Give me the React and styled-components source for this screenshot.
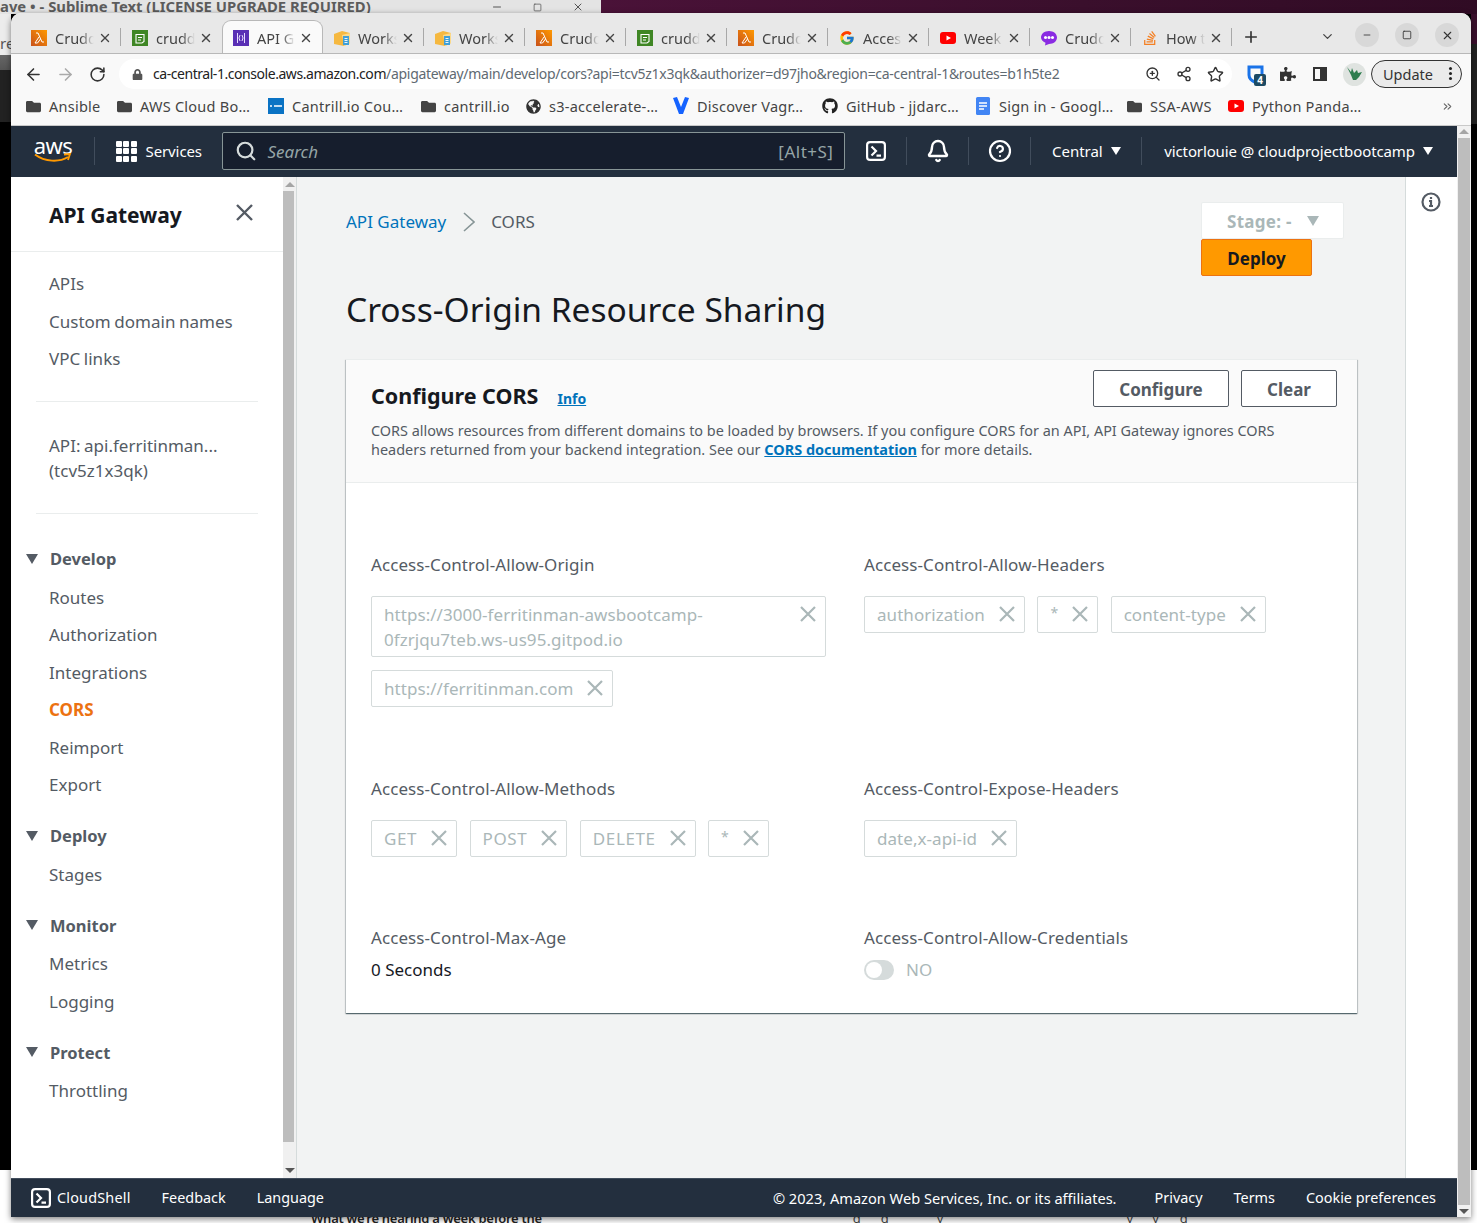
import styled, { createGlobalStyle } from 'styled-components';
import {
  ArrowLeft,
  ArrowRight,
  Bell,
  ChevronDown,
  ChevronsRight,
  CircleHelp,
  Minus,
  Plus,
  RotateCw,
  Search,
  Share2,
  Square,
  Star,
  X,
  ZoomIn,
} from 'lucide-react';
import { FaFolder, FaGithub, FaGlobeAmericas, FaLock, FaPuzzlePiece, FaStackOverflow } from 'react-icons/fa';
import { FcGoogle } from 'react-icons/fc';

const TABS = [
  { icon: 'lambda', title: 'Crudder' },
  { icon: 'rds', title: 'cruddur' },
  { icon: 'gateway', title: 'API Gateway', active: true },
  { icon: 'box', title: 'Workspaces' },
  { icon: 'box', title: 'Workspaces' },
  { icon: 'lambda', title: 'Crudder' },
  { icon: 'rds', title: 'cruddur' },
  { icon: 'lambda', title: 'Crudder' },
  { icon: 'google', title: 'Access' },
  { icon: 'youtube', title: 'Week 2' },
  { icon: 'chat', title: 'Cruddur' },
  { icon: 'stack', title: 'How to' },
];

const BOOKMARKS = [
  { icon: 'folder', label: 'Ansible', width: 91 },
  { icon: 'folder', label: 'AWS Cloud Bo…', width: 152 },
  { icon: 'cantrill', label: 'Cantrill.io Cou…', width: 152 },
  { icon: 'folder', label: 'cantrill.io', width: 105 },
  { icon: 'globe', label: 's3-accelerate-…', width: 148 },
  { icon: 'vagrant', label: 'Discover Vagr…', width: 149 },
  { icon: 'github', label: 'GitHub - jjdarc…', width: 153 },
  { icon: 'doc', label: 'Sign in - Googl…', width: 151 },
  { icon: 'folder', label: 'SSA-AWS', width: 102 },
  { icon: 'youtube', label: 'Python Panda…', width: 207 },
];

const NAV_GROUPS = [
  { title: 'Develop', items: ['Routes', 'Authorization', 'Integrations', 'CORS', 'Reimport', 'Export'] },
  { title: 'Deploy', items: ['Stages'] },
  { title: 'Monitor', items: ['Metrics', 'Logging'] },
  { title: 'Protect', items: ['Throttling'] },
];

// letters of the page behind the browser, only their tails stick out below the window
const BEHIND_TAILS = [
  { letter: 'g', gap: 311 },
  { letter: 'g', gap: 20 },
  { letter: 'y', gap: 48 },
  { letter: 'y', gap: 183 },
  { letter: 'y', gap: 19 },
  { letter: 'g', gap: 21 },
];

function SiteIcon({ kind }) {
  switch (kind) {
    case 'lambda':
      return (
        <svg width="16" height="16" viewBox="0 0 16 16">
          <defs>
            <linearGradient id="lambdaFill" x1="0" y1="1" x2="1" y2="0">
              <stop offset="0" stopColor="#c8511b" />
              <stop offset="1" stopColor="#ff9900" />
            </linearGradient>
          </defs>
          <rect width="16" height="16" fill="url(#lambdaFill)" />
          <path d="M5 3h2l4 9h2M8 7l-4 6h2.5l3-4" fill="none" stroke="#fff" strokeWidth="1" />
        </svg>
      );
    case 'rds':
      return (
        <svg width="16" height="16" viewBox="0 0 16 16">
          <rect width="16" height="16" fill="#3f8624" />
          <path d="M4 4.5h8v7l-2 1.5H4zM6 7.5h4M6 10h3" fill="none" stroke="#fff" strokeWidth="1.1" />
        </svg>
      );
    case 'gateway':
      return (
        <svg width="16" height="16" viewBox="0 0 16 16">
          <rect width="16" height="16" fill="#5a30b5" />
          <path d="M4.5 3v10M11.5 3v10M7 5l-1 3 1 3M9 5l1 3-1 3" fill="none" stroke="#e6dcff" strokeWidth="1" />
        </svg>
      );
    case 'box':
      return (
        <svg width="16" height="16" viewBox="0 0 16 16">
          <path d="M0 4l8-3 8 2v10l-6 3-10-2z" fill="#f5b840" />
          <path d="M8 5l8-2v10l-6 3z" fill="#fbd98a" />
          <path d="M9 6h6v9H9z" fill="#3f9fd8" />
          <path d="M10.5 8.5h3M10.5 10.5h3M10.5 12.5h3" stroke="#fff" strokeWidth="0.9" />
        </svg>
      );
    case 'google':
      return <FcGoogle size={16} />;
    case 'youtube':
      return (
        <svg width="16" height="16" viewBox="0 0 16 16">
          <rect y="2" width="16" height="12" rx="3" fill="#f00" />
          <path d="M6.5 5.5L11 8l-4.5 2.5z" fill="#fff" />
        </svg>
      );
    case 'chat':
      return (
        <svg width="16" height="16" viewBox="0 0 16 16">
          <path d="M8 1c4.5 0 8 2.8 8 6.5S12.5 14 8 14l-4 1.5.5-2.7C1.8 11.500 0 9.7 0 7.5 0 3.8 3.5 1 8 1z" fill="#8a2be2" />
          <circle cx="4.5" cy="7.5" r="1.5" fill="#fff" />
          <circle cx="8" cy="7.5" r="1.5" fill="#fff" />
          <circle cx="11.5" cy="7.5" r="1.5" fill="#fff" />
        </svg>
      );
    case 'stack':
      return <FaStackOverflow size={16} color="#f48024" />;
    case 'folder':
      return <FaFolder size={15} color="#444" />;
    case 'cantrill':
      return (
        <svg width="16" height="16" viewBox="0 0 16 16">
          <rect width="16" height="16" fill="#0a73c4" />
          <path d="M2 8h2M6 8h8" stroke="#fff" strokeWidth="1.5" />
        </svg>
      );
    case 'globe':
      return <FaGlobeAmericas size={15} color="#333" />;
    case 'vagrant':
      return (
        <svg width="16" height="18" viewBox="0 0 16 18">
          <path d="M0 1l4-1 4 10 4-10 4 1-6 16H6z" fill="#1563ff" />
        </svg>
      );
    case 'github':
      return <FaGithub size={16} color="#222" />;
    case 'doc':
      return (
        <svg width="16" height="18" viewBox="0 0 16 18">
          <rect x="1" width="14" height="18" rx="1.5" fill="#4285f4" />
          <path d="M4 6h8M4 9h8M4 12h5" stroke="#fff" strokeWidth="1.5" />
        </svg>
      );
    default:
      return null;
  }
}

function ShellIcon() {
  return (
    <svg width="20" height="20" viewBox="0 0 20 20" fill="none" stroke="#fff" strokeWidth="2.2">
      <rect x="1.1" y="1.1" width="17.8" height="17.8" rx="3" />
      <path d="M5.5 5.5l4.5 4.500-4.5 4.500M10.5 14.700h4.500" />
    </svg>
  );
}

function Cross({ size = 16, weight = 2.2 }) {
  return (
    <svg width={size} height={size} viewBox={`0 0 ${size} ${size}`} fill="none" stroke="currentColor" strokeWidth={weight}>
      <path d={`M1 1L${size - 1} ${size - 1}M${size - 1} 1L1 ${size - 1}`} />
    </svg>
  );
}

function Chip({ children, wide, caps, star }) {
  return (
    <ChipBox $wide={wide}>
      <ChipText $caps={caps} $star={star}>
        {children}
      </ChipText>
      <ChipClose>
        <Cross />
      </ChipClose>
    </ChipBox>
  );
}

function TabItem({ tab, hideSeparator }) {
  return (
    <Tab $active={tab.active} $hideSeparator={hideSeparator}>
      <TabIcon>
        <SiteIcon kind={tab.icon} />
      </TabIcon>
      <TabTitle>{tab.title}</TabTitle>
      <X size={14} strokeWidth={2.4} color="#444" />
    </Tab>
  );
}

export default function App() {
  return (
    <Desktop>
      <GlobalStyle />
      <Wallpaper />
      <SublimeBar>
        <SublimeTitle>ave • - Sublime Text (LICENSE UPGRADE REQUIRED)</SublimeTitle>
        <SublimeControls>
          <Minus size={12} />
          <Square size={9} />
          <X size={12} />
        </SublimeControls>
      </SublimeBar>
      <LeftEdge>re</LeftEdge>
      <RightEdge />
      <ArticleBehind>
        <ArticleLine>What we’re hearing a week before the</ArticleLine>
        {BEHIND_TAILS.map((tail, index) => (
          <ArticleTail key={index} $gap={tail.gap}>
            {tail.letter}
          </ArticleTail>
        ))}
      </ArticleBehind>

      <BrowserWindow>
        <TabStrip>
          {TABS.map((tab, index) => (
            <TabItem key={index} tab={tab} hideSeparator={TABS[index + 1]?.active} />
          ))}
          <NewTab>
            <Plus size={18} strokeWidth={2.2} />
          </NewTab>
          <TabSearch>
            <ChevronDown size={15} strokeWidth={2} />
          </TabSearch>
          <WindowControl>
            <Minus size={10} />
          </WindowControl>
          <WindowControl>
            <Square size={10} />
          </WindowControl>
          <WindowControl>
            <X size={13} />
          </WindowControl>
        </TabStrip>

        <Toolbar>
          <ToolButton>
            <ArrowLeft size={19} strokeWidth={2} />
          </ToolButton>
          <ToolButton $dim>
            <ArrowRight size={19} strokeWidth={2} />
          </ToolButton>
          <ToolButton>
            <RotateCw size={17} strokeWidth={2.2} />
          </ToolButton>
          <Omnibox>
            <FaLock size={11} color="#555" />
            <UrlText>
              <UrlHost>ca-central-1.console.aws.amazon.com</UrlHost>
              /apigateway/main/develop/cors?api=tcv5z1x3qk&authorizer=d97jho&region=ca-central-1&routes=b1h5te2
            </UrlText>
            <OmniIcons>
              <ZoomIn size={16} />
              <Share2 size={16} />
              <Star size={17} />
            </OmniIcons>
          </Omnibox>
          <ExtensionIcons>
            <Bitwarden>
              <svg width="17" height="19" viewBox="0 0 17 19" fill="none">
                <path d="M2 2h13v8c0 3.5-3 6-6.5 7.5C5 16 2 13.5 2 10z" stroke="#1a73e8" strokeWidth="3" />
              </svg>
              <BadgeCount>4</BadgeCount>
            </Bitwarden>
            <FaPuzzlePiece size={16} color="#333" />
            <SidePanelIcon />
            <Avatar>
              <svg width="18" height="16" viewBox="0 0 18 16">
                <path d="M1 1l4 5 1-4 2 5 3-3 1 3 4-1-3 5-3 3H7L5 9z" fill="#2e7d4f" />
              </svg>
            </Avatar>
          </ExtensionIcons>
          <UpdatePill>
            <span>Update</span>
            <PillDots>
              <i />
              <i />
              <i />
            </PillDots>
          </UpdatePill>
        </Toolbar>

        <BookmarkBar>
          {BOOKMARKS.map((bookmark) => (
            <Bookmark key={bookmark.label} $width={bookmark.width}>
              <BookmarkIcon>
                <SiteIcon kind={bookmark.icon} />
              </BookmarkIcon>
              {bookmark.label}
            </Bookmark>
          ))}
          <BookmarkMore>
            <ChevronsRight size={13} strokeWidth={2} />
          </BookmarkMore>
        </BookmarkBar>

        <PageArea>
          <Console>
            <TopNav>
              <AwsLogo>
                <AwsWord>aws</AwsWord>
                <svg width="38" height="10" viewBox="0 0 38 10" fill="none">
                  <path d="M1 1.5c10 7.5 24 8 33 2.5" stroke="#f90" strokeWidth="2" />
                  <path d="M30 1.5l6-.5-2 6" stroke="#f90" strokeWidth="1.8" />
                </svg>
              </AwsLogo>
              <NavDivider />
              <ServicesButton>
                <GridDots>
                  {Array.from({ length: 9 }, (_, index) => (
                    <i key={index} />
                  ))}
                </GridDots>
                Services
              </ServicesButton>
              <SearchBox>
                <Search size={22} strokeWidth={2.4} color="#d5dbdb" />
                <SearchPlaceholder>Search</SearchPlaceholder>
                <SearchHint>[Alt+S]</SearchHint>
              </SearchBox>
              <ShellIcon />
              <NavDivider />
              <NavIcon>
                <Bell size={24} strokeWidth={2.4} color="#fff" />
              </NavIcon>
              <NavDivider />
              <NavIcon>
                <CircleHelp size={24} strokeWidth={2.2} color="#fff" />
              </NavIcon>
              <NavDivider />
              <NavMenu>
                Central <Caret />
              </NavMenu>
              <NavDivider />
              <NavMenu $account>
                victorlouie @ cloudprojectbootcamp <Caret />
              </NavMenu>
            </TopNav>

            <ConsoleBody>
              <Sidebar>
                <SidebarHeader>
                  <SidebarTitle>API Gateway</SidebarTitle>
                  <SidebarClose>
                    <Cross size={17} weight={2.4} />
                  </SidebarClose>
                </SidebarHeader>
                <NavList>
                  <NavItem>APIs</NavItem>
                  <NavItem>Custom domain names</NavItem>
                  <NavItem>VPC links</NavItem>
                </NavList>
                <SidebarRule />
                <ApiName>
                  API: api.ferritinman...
                  <br />
                  (tcv5z1x3qk)
                </ApiName>
                <SidebarRule />
                <NavGroups>
                  {NAV_GROUPS.map((group) => (
                    <NavGroup key={group.title}>
                      <NavGroupTitle>
                        <GroupCaret />
                        {group.title}
                      </NavGroupTitle>
                      {group.items.map((item) => (
                        <NavItem key={item} $current={item === 'CORS'}>
                          {item}
                        </NavItem>
                      ))}
                    </NavGroup>
                  ))}
                </NavGroups>
              </Sidebar>
              <SidebarScroll>
                <ScrollUp />
                <SidebarThumb />
                <ScrollDown />
              </SidebarScroll>

              <Main>
                <MainTop>
                  <Breadcrumbs>
                    <CrumbLink>API Gateway</CrumbLink>
                    <svg width="12" height="20" viewBox="0 0 12 20" fill="none" stroke="#879596" strokeWidth="1.6">
                      <path d="M1 1l10 9-10 9" />
                    </svg>
                    <span>CORS</span>
                  </Breadcrumbs>
                  <StageColumn>
                    <StageSelect>
                      Stage: - <StageCaret />
                    </StageSelect>
                    <DeployButton>Deploy</DeployButton>
                  </StageColumn>
                </MainTop>
                <PageTitle>Cross-Origin Resource Sharing</PageTitle>

                <Card>
                  <CardHeader>
                    <CardTitleRow>
                      <CardTitle>Configure CORS</CardTitle>
                      <InfoLink>Info</InfoLink>
                      <CardActions>
                        <OutlineButton $width={136}>Configure</OutlineButton>
                        <OutlineButton $width={96}>Clear</OutlineButton>
                      </CardActions>
                    </CardTitleRow>
                    <CardDescription>
                      CORS allows resources from different domains to be loaded by browsers. If you configure CORS for an API, API Gateway ignores CORS
                      <br />
                      headers returned from your backend integration. See our <DocLink>CORS documentation</DocLink> for more details.
                    </CardDescription>
                  </CardHeader>

                  <FormGrid>
                    <Field>
                      <FieldLabel>Access-Control-Allow-Origin</FieldLabel>
                      <ChipList>
                        <Chip wide>https://3000-ferritinman-awsbootcamp-0fzrjqu7teb.ws-us95.gitpod.io</Chip>
                        <Chip>https://ferritinman.com</Chip>
                      </ChipList>
                    </Field>
                    <Field>
                      <FieldLabel>Access-Control-Allow-Headers</FieldLabel>
                      <ChipList>
                        <Chip>authorization</Chip>
                        <Chip star>*</Chip>
                        <Chip>content-type</Chip>
                      </ChipList>
                    </Field>
                    <Field>
                      <FieldLabel>Access-Control-Allow-Methods</FieldLabel>
                      <ChipList>
                        <Chip caps>GET</Chip>
                        <Chip caps>POST</Chip>
                        <Chip caps>DELETE</Chip>
                        <Chip star>*</Chip>
                      </ChipList>
                    </Field>
                    <Field>
                      <FieldLabel>Access-Control-Expose-Headers</FieldLabel>
                      <ChipList>
                        <Chip>date,x-api-id</Chip>
                      </ChipList>
                    </Field>
                    <Field>
                      <FieldLabel>Access-Control-Max-Age</FieldLabel>
                      <FieldValue>0 Seconds</FieldValue>
                    </Field>
                    <Field>
                      <FieldLabel>Access-Control-Allow-Credentials</FieldLabel>
                      <ToggleRow>
                        <Toggle />
                        NO
                      </ToggleRow>
                    </Field>
                  </FormGrid>
                </Card>
              </Main>

              <InfoRail>
                <svg width="20" height="20" viewBox="0 0 20 20" fill="none" stroke="#545b64" strokeWidth="2.2">
                  <circle cx="10" cy="10" r="8.5" />
                  <path d="M8 9h2v5M8 14h4M10 5v2" />
                </svg>
              </InfoRail>
            </ConsoleBody>

            <Footer>
              <FooterGroup>
                <CloudShellLink>
                  <ShellIcon />
                  CloudShell
                </CloudShellLink>
                <span>Feedback</span>
                <span>Language</span>
              </FooterGroup>
              <FooterLegal>
                <span>© 2023, Amazon Web Services, Inc. or its affiliates.</span>
                <span>Privacy</span>
                <span>Terms</span>
                <span>Cookie preferences</span>
              </FooterLegal>
            </Footer>
          </Console>
          <PageScroll>
            <ScrollUp />
            <PageThumb />
            <ScrollDown />
          </PageScroll>
        </PageArea>
      </BrowserWindow>
    </Desktop>
  );
}

const GlobalStyle = createGlobalStyle`
  html, body {
    margin: 0;
    padding: 0;
  }
  body {
    font-family: "Noto Sans", "Open Sans", sans-serif;
    overflow: hidden;
  }
  * {
    box-sizing: border-box;
  }
`;

const Desktop = styled.div`
  position: relative;
  width: 1477px;
  height: 1223px;
  overflow: hidden;
  background: #000;
`;

const Wallpaper = styled.div`
  position: absolute;
  top: 0;
  left: 601px;
  right: 0;
  height: 14px;
  background: linear-gradient(90deg, #4a1238, #3a0f2c 55%, #300b24);
`;

const SublimeBar = styled.div`
  position: absolute;
  top: 0;
  left: 0;
  width: 601px;
  height: 14px;
  display: flex;
  align-items: center;
  justify-content: space-between;
  background: #e4e4e4;
  overflow: hidden;
`;

const SublimeTitle = styled.span`
  font-size: 14.85px;
  font-weight: 700;
  color: #5c5c5c;
  white-space: nowrap;
  margin-top: -3px;
`;

const SublimeControls = styled.div`
  display: flex;
  align-items: center;
  gap: 30px;
  padding-right: 17px;
  color: #555;
`;

const LeftEdge = styled.div`
  position: absolute;
  top: 14px;
  left: 0;
  width: 11px;
  height: 1156px;
  overflow: hidden;
  padding-top: 21px;
  font-size: 15px;
  line-height: 16px;
  color: #555;
  background: linear-gradient(
    180deg,
    #ececec 0,
    #ececec 41px,
    #666 41px,
    #555 56px,
    #222 56px,
    #222 108px,
    #000 108px
  );
`;

const RightEdge = styled.div`
  position: absolute;
  top: 14px;
  right: 0;
  width: 6px;
  height: 1156px;
  background: linear-gradient(180deg, #3a0f2c 0, #3a0f2c 30px, #222 30px, #222 110px, #000 110px);
`;

const ArticleBehind = styled.div`
  position: absolute;
  left: 0;
  right: 0;
  top: 1170px;
  bottom: 0;
  display: flex;
  align-items: flex-end;
  background: #fff;
`;

const ArticleLine = styled.span`
  margin-left: 311px;
  margin-bottom: -2px;
  font-size: 13px;
  line-height: 14px;
  font-weight: 600;
  letter-spacing: -0.27px;
  color: #222;
  white-space: nowrap;
`;

const ArticleTail = styled.span`
  margin-left: ${(props) => props.$gap}px;
  margin-bottom: -2px;
  font-size: 13px;
  line-height: 14px;
  color: #444;
`;

const BrowserWindow = styled.div`
  position: absolute;
  top: 13px;
  left: 11px;
  width: 1460px;
  height: 1204px;
  display: flex;
  flex-direction: column;
  border-radius: 10px 10px 0 0;
  overflow: hidden;
  box-shadow: 0 2px 6px rgba(0, 0, 0, 0.5);
  background: #fff;
`;

const TabStrip = styled.div`
  display: flex;
  align-items: flex-end;
  height: 41px;
  padding-left: 9px;
  background: #e8e8e8;
  border-bottom: 1px solid #b8b8b8;
  flex-shrink: 0;
  overflow: hidden;
`;

const Tab = styled.div`
  position: relative;
  width: 101px;
  height: 33px;
  display: flex;
  align-items: center;
  padding: 2px 9px 0 ${(props) => (props.$active ? '10px' : '11px')};
  flex-shrink: 0;
  color: #444;
  background: ${(props) => (props.$active ? '#fafafa' : 'transparent')};
  border-radius: ${(props) => (props.$active ? '9px 9px 0 0' : '0')};
  border: ${(props) => (props.$active ? '1px solid #b8b8b8' : '0')};
  border-bottom: 0;

  &::after {
    content: '';
    display: ${(props) => (props.$active || props.$hideSeparator ? 'none' : 'block')};
    position: absolute;
    right: 0;
    top: 8px;
    width: 1px;
    height: 18px;
    background: #a8a8a8;
  }
`;

const TabIcon = styled.span`
  display: flex;
  width: 16px;
  height: 16px;
  flex-shrink: 0;
`;

const TabTitle = styled.span`
  flex: 1;
  min-width: 0;
  margin: 0 4px 0 8px;
  overflow: hidden;
  white-space: nowrap;
  font-size: 14.5px;
  mask-image: linear-gradient(90deg, #000 65%, transparent 100%);
`;

const NewTab = styled.div`
  display: flex;
  align-items: center;
  justify-content: center;
  width: 18px;
  height: 33px;
  margin-left: 10px;
  color: #333;
  flex-shrink: 0;
`;

const TabSearch = styled.div`
  display: flex;
  align-items: center;
  height: 33px;
  margin-left: 60px;
  margin-right: 20px;
  color: #444;
  flex-shrink: 0;
`;

const WindowControl = styled.div`
  display: flex;
  align-items: center;
  justify-content: center;
  width: 24px;
  height: 24px;
  margin-right: 16px;
  margin-bottom: 6px;
  border-radius: 50%;
  background: #d8d8d8;
  color: #333;
  flex-shrink: 0;
`;

const Toolbar = styled.div`
  display: flex;
  align-items: center;
  height: 38px;
  padding: 2px 0 0 6px;
  background: #f9f9f9;
  flex-shrink: 0;
`;

const ToolButton = styled.div`
  display: flex;
  align-items: center;
  justify-content: center;
  width: 32px;
  color: ${(props) => (props.$dim ? '#aaa' : '#333')};
`;

const Omnibox = styled.div`
  display: flex;
  align-items: center;
  width: 1113px;
  height: 30px;
  margin-left: 6px;
  padding-left: 13px;
  border-radius: 15px;
  background: #fff;
`;

const UrlText = styled.div`
  margin: -2px 0 0 10px;
  font-size: 14px;
  color: #5f6a72;
  white-space: nowrap;
  letter-spacing: -0.28px;
`;

const UrlHost = styled.span`
  color: #222;
  letter-spacing: -0.45px;
`;

const OmniIcons = styled.div`
  display: flex;
  align-items: center;
  gap: 15px;
  margin-left: auto;
  padding-right: 8px;
  color: #333;
`;

const ExtensionIcons = styled.div`
  display: flex;
  align-items: center;
  gap: 16px;
  margin-left: 15px;
`;

const Bitwarden = styled.div`
  position: relative;
  display: flex;
  width: 17px;
  height: 19px;
`;

const BadgeCount = styled.span`
  position: absolute;
  left: 7px;
  top: 9px;
  width: 12px;
  height: 12px;
  border-radius: 2px;
  background: #1d4a63;
  color: #fff;
  font-size: 10px;
  font-weight: 700;
  line-height: 12px;
  text-align: center;
`;

const SidePanelIcon = styled.div`
  width: 14px;
  height: 14px;
  border: 2px solid #333;
  border-right-width: 7px;
  margin-left: 1px;
`;

const Avatar = styled.div`
  display: flex;
  align-items: center;
  justify-content: center;
  width: 23px;
  height: 23px;
  border-radius: 50%;
  background: #dfe3e0;
`;

const UpdatePill = styled.div`
  display: flex;
  align-items: center;
  justify-content: space-between;
  width: 91px;
  height: 28px;
  margin-left: 5px;
  padding: 0 9px 1px 11px;
  border: 1px solid #333;
  border-radius: 14px;
  background: #ebebeb;
  color: #333;
  font-size: 14.5px;
`;

const PillDots = styled.div`
  display: flex;
  flex-direction: column;
  gap: 2px;

  i {
    display: block;
    width: 3px;
    height: 3px;
    border-radius: 50%;
    background: #222;
  }
`;

const BookmarkBar = styled.div`
  display: flex;
  align-items: center;
  height: 34px;
  padding: 0 0 5px 14px;
  background: #f9f9f9;
  border-bottom: 1px solid #c9c9c9;
  flex-shrink: 0;
`;

const Bookmark = styled.div`
  display: flex;
  align-items: center;
  width: ${(props) => props.$width}px;
  font-size: 14.5px;
  letter-spacing: 0.25px;
  color: #444;
  white-space: nowrap;
  flex-shrink: 0;
`;

const BookmarkIcon = styled.span`
  display: flex;
  align-items: center;
  justify-content: center;
  width: 16px;
  height: 18px;
  margin-right: 8px;
`;

const BookmarkMore = styled.div`
  display: flex;
  margin-left: 6px;
  color: #666;
`;

const PageArea = styled.div`
  display: flex;
  flex: 1;
  min-height: 0;
`;

const Console = styled.div`
  display: flex;
  flex-direction: column;
  width: 1446px;
  flex-shrink: 0;
`;

const PageScroll = styled.div`
  display: flex;
  flex-direction: column;
  align-items: center;
  width: 14px;
  padding: 3px 0;
  background: #f1f1f1;
`;

const PageThumb = styled.div`
  flex: 1;
  width: 12px;
  margin: 4px 0;
  background: #bdbdbd;
`;

const ScrollUp = styled.div`
  width: 0;
  height: 0;
  border-left: 5px solid transparent;
  border-right: 5px solid transparent;
  border-bottom: 5px solid #a5a5a5;
`;

const ScrollDown = styled.div`
  width: 0;
  height: 0;
  border-left: 5px solid transparent;
  border-right: 5px solid transparent;
  border-top: 5px solid #555;
`;

const TopNav = styled.div`
  display: flex;
  align-items: center;
  gap: 20.5px;
  height: 51px;
  padding: 0 24px 1px 23px;
  background: #232f3e;
  color: #fff;
  font-size: 15px;
  flex-shrink: 0;
`;

const AwsLogo = styled.div`
  display: flex;
  flex-direction: column;
  align-items: center;
  width: 38px;
  height: 30px;
  margin-right: 1.5px;
  flex-shrink: 0;

  svg {
    margin-top: -5px;
  }
`;

const AwsWord = styled.span`
  font-size: 22px;
  line-height: 25px;
  letter-spacing: -0.5px;
  margin-top: -3px;
`;

const NavDivider = styled.div`
  width: 1px;
  height: 28px;
  background: #414d5c;
  flex-shrink: 0;
`;

const ServicesButton = styled.div`
  display: flex;
  align-items: center;
  gap: 9px;
  letter-spacing: -0.1px;
  white-space: nowrap;
  flex-shrink: 0;
`;

const GridDots = styled.div`
  display: grid;
  grid-template-columns: repeat(3, 6px);
  gap: 1.5px;

  i {
    display: block;
    width: 6px;
    height: 6px;
    border-radius: 1px;
    background: #fff;
  }
`;

const SearchBox = styled.div`
  display: flex;
  align-items: center;
  width: 623px;
  height: 38px;
  padding: 0 11px 0 12px;
  border: 1px solid #879596;
  border-radius: 2px;
  background: #161e2d;
  flex-shrink: 0;
`;

const SearchPlaceholder = styled.span`
  margin-left: 10px;
  font-style: italic;
  color: #95a5a6;
  font-size: 17px;
`;

const SearchHint = styled.span`
  margin-left: auto;
  color: #95a5a6;
  font-size: 17px;
  letter-spacing: 0.5px;
`;

const NavIcon = styled.div`
  display: flex;
  justify-content: center;
  width: 20px;
  flex-shrink: 0;

  svg {
    flex-shrink: 0;
  }
`;

const NavMenu = styled.div`
  display: flex;
  align-items: center;
  gap: 8px;
  margin-left: ${(props) => (props.$account ? '1.5px' : '0')};
  letter-spacing: ${(props) => (props.$account ? '-0.12px' : '0')};
  white-space: nowrap;
  flex-shrink: 0;
`;

const Caret = styled.span`
  width: 0;
  height: 0;
  border-left: 5.5px solid transparent;
  border-right: 5.5px solid transparent;
  border-top: 8px solid #fff;
`;

const ConsoleBody = styled.div`
  display: flex;
  flex: 1;
  min-height: 0;
  background: #f2f3f3;
`;

const Sidebar = styled.nav`
  width: 272px;
  flex-shrink: 0;
  background: #fff;
  color: #545b64;
  font-size: 17px;
  word-spacing: -0.8px;
`;

const SidebarHeader = styled.div`
  display: flex;
  align-items: flex-start;
  justify-content: space-between;
  height: 75px;
  padding: 23px 30px 0 38px;
  border-bottom: 1px solid #eaeded;
`;

const SidebarTitle = styled.h2`
  margin: 0;
  font-size: 21px;
  line-height: 30px;
  font-weight: 700;
  word-spacing: 0;
  color: #16191f;
`;

const SidebarClose = styled.div`
  display: flex;
  margin-top: 4px;
  color: #545b64;
`;

const NavList = styled.div`
  padding-top: 13px;
`;

const NavItem = styled.div`
  height: 37.5px;
  padding-left: 38px;
  line-height: 37.5px;
  white-space: nowrap;
  color: ${(props) => (props.$current ? '#ec7211' : 'inherit')};
  font-weight: ${(props) => (props.$current ? 700 : 400)};
`;

const SidebarRule = styled.div`
  height: 1px;
  margin: 23px 25px 0;
  background: #eaeded;
`;

const ApiName = styled.div`
  margin-top: 31px;
  margin-bottom: 30px;
  padding-left: 38px;
  line-height: 25px;
`;

const NavGroups = styled.div`
  padding-top: 13px;
`;

const NavGroup = styled.div`
  margin-top: 13px;
`;

const NavGroupTitle = styled.div`
  display: flex;
  align-items: center;
  height: 39px;
  padding: 0 0 1px 15px;
  font-size: 16.5px;
  font-weight: 700;
`;

const GroupCaret = styled.span`
  width: 0;
  height: 0;
  margin-right: 12px;
  border-left: 6.5px solid transparent;
  border-right: 6.5px solid transparent;
  border-top: 10px solid #545b64;
`;

const SidebarScroll = styled.div`
  display: flex;
  flex-direction: column;
  align-items: center;
  width: 14px;
  padding: 5px 0;
  background: #f0f0f0;
  border-right: 1px solid #d5dbdb;
  flex-shrink: 0;
`;

const SidebarThumb = styled.div`
  flex: 1;
  align-self: flex-start;
  width: 11px;
  margin: 4px 0 26px;
  background: #bdbdbd;
`;

const Main = styled.main`
  flex: 1;
  min-width: 0;
  padding: 25px 48px 0 49px;
  background: #f2f3f3;
`;

const MainTop = styled.div`
  display: flex;
  justify-content: space-between;
  align-items: flex-start;
  padding-right: 13px;
`;

const Breadcrumbs = styled.div`
  display: flex;
  align-items: center;
  gap: 16.5px;
  margin-top: 8px;
  font-size: 17px;
  line-height: 24px;
  color: #545b64;
`;

const CrumbLink = styled.span`
  color: #0073bb;
`;

const StageColumn = styled.div`
  display: flex;
  flex-direction: column;
  align-items: flex-start;
  width: 143px;
`;

const StageSelect = styled.div`
  display: flex;
  align-items: center;
  gap: 15px;
  width: 143px;
  height: 37px;
  padding: 1px 0 0 25px;
  border: 1px solid #eaeded;
  border-radius: 2px;
  background: #fff;
  color: #aab7b8;
  font-size: 17px;
  font-weight: 700;
  letter-spacing: 0.3px;
`;

const StageCaret = styled.span`
  width: 0;
  height: 0;
  border-left: 6.5px solid transparent;
  border-right: 6.5px solid transparent;
  border-top: 10px solid #aab7b8;
`;

const DeployButton = styled.div`
  width: 111px;
  height: 37px;
  border: 1px solid #ec7211;
  border-radius: 2px;
  background: #f90;
  color: #16191f;
  font-size: 17px;
  font-weight: 700;
  line-height: 37px;
  text-align: center;
`;

const PageTitle = styled.h1`
  margin: 13px 0 30px;
  font-size: 33.5px;
  line-height: 40px;
  font-weight: 400;
  color: #16191f;
  white-space: nowrap;
`;

const Card = styled.section`
  width: 1011px;
  background: #fff;
  border-top: 1px solid #eaeded;
  box-shadow: 0 1px 1px 0 rgba(0, 28, 36, 0.5), 1px 1px 1px 0 rgba(0, 28, 36, 0.15), -1px 1px 1px 0 rgba(0, 28, 36, 0.15);
`;

const CardHeader = styled.header`
  height: 123px;
  padding: 10px 20px 0 25px;
  background: #fafafa;
  border-bottom: 1px solid #eaeded;
`;

const CardTitleRow = styled.div`
  display: flex;
  align-items: flex-start;
`;

const CardTitle = styled.h2`
  margin: 10px 0 0;
  font-size: 21.5px;
  line-height: 32px;
  font-weight: 700;
  color: #16191f;
  white-space: nowrap;
`;

const InfoLink = styled.span`
  margin: 19px 0 0 19px;
  font-size: 14px;
  line-height: 20px;
  font-weight: 700;
  color: #0073bb;
  text-decoration: underline;
`;

const CardActions = styled.div`
  display: flex;
  gap: 12px;
  margin-left: auto;
`;

const OutlineButton = styled.div`
  width: ${(props) => props.$width}px;
  height: 37px;
  border: 1px solid #545b64;
  border-radius: 2px;
  background: #fff;
  color: #545b64;
  font-size: 17px;
  font-weight: 700;
  line-height: 38px;
  text-align: center;
`;

const CardDescription = styled.p`
  margin: 9px 0 0;
  font-size: 14.44px;
  line-height: 19px;
  color: #545b64;
  white-space: nowrap;
`;

const DocLink = styled.span`
  color: #0073bb;
  font-weight: 700;
  text-decoration: underline;
`;

const FormGrid = styled.div`
  display: grid;
  grid-template-columns: 455px 455px;
  column-gap: 38px;
  row-gap: 71px;
  padding: 72px 0 33px 25px;
`;

const Field = styled.div`
  &:nth-child(-n + 2) {
    padding-bottom: 1px;
  }
`;

const FieldLabel = styled.div`
  font-size: 17px;
  line-height: 20px;
  letter-spacing: 0.08px;
  color: #545b64;
  white-space: nowrap;
`;

const ChipList = styled.div`
  display: flex;
  flex-wrap: wrap;
  gap: 13px 12.5px;
  margin-top: 21px;
`;

const ChipBox = styled.div`
  display: flex;
  align-items: flex-start;
  ${(props) => (props.$wide ? 'width: 455px; justify-content: space-between;' : '')}
  min-height: 37px;
  padding: 5px 9px ${(props) => (props.$wide ? '4px' : '5px')} 12px;
  border: 1px solid #d5dbdb;
  border-radius: 2px;
  background: #fff;
`;

const ChipText = styled.span`
  max-width: 345px;
  font-size: ${(props) => (props.$star ? '14px' : '17px')};
  line-height: ${(props) => (props.$star ? '21px' : '25px')};
  letter-spacing: ${(props) => (props.$caps ? '0.6px' : '0.05px')};
  color: #aab7b8;
`;

const ChipClose = styled.span`
  display: flex;
  margin: 4px 0 0 14px;
  color: #aab7b8;
`;

const FieldValue = styled.div`
  margin-top: 12px;
  font-size: 17px;
  line-height: 20px;
  color: #16191f;
`;

const ToggleRow = styled.div`
  display: flex;
  align-items: center;
  gap: 12px;
  margin-top: 12px;
  font-size: 17px;
  line-height: 20px;
  color: #aab7b8;
`;

const Toggle = styled.div`
  position: relative;
  width: 30px;
  height: 20px;
  border-radius: 10px;
  background: #d5dbdb;

  &::after {
    content: '';
    position: absolute;
    left: 2px;
    top: 2px;
    width: 16px;
    height: 16px;
    border-radius: 50%;
    background: #fff;
  }
`;

const InfoRail = styled.aside`
  display: flex;
  align-items: flex-start;
  justify-content: center;
  width: 52px;
  padding: 15px 1px 0 0;
  background: #fff;
  border-left: 1px solid #d5dbdb;
  flex-shrink: 0;
`;

const Footer = styled.footer`
  display: flex;
  align-items: center;
  justify-content: space-between;
  height: 39px;
  padding: 0 21px 1px 20px;
  background: #232f3e;
  border-top: 1px solid #414d5c;
  color: #fff;
  font-size: 14.4px;
  white-space: nowrap;
  flex-shrink: 0;
`;

const FooterGroup = styled.div`
  display: flex;
  align-items: center;
  gap: 31px;
`;

const CloudShellLink = styled.div`
  display: flex;
  align-items: center;
  gap: 6px;
  letter-spacing: 0.2px;
`;

const FooterLegal = styled.div`
  display: flex;
  align-items: center;
  gap: 31px;

  span:first-child {
    margin-right: 7px;
    font-size: 14.6px;
  }
`;
